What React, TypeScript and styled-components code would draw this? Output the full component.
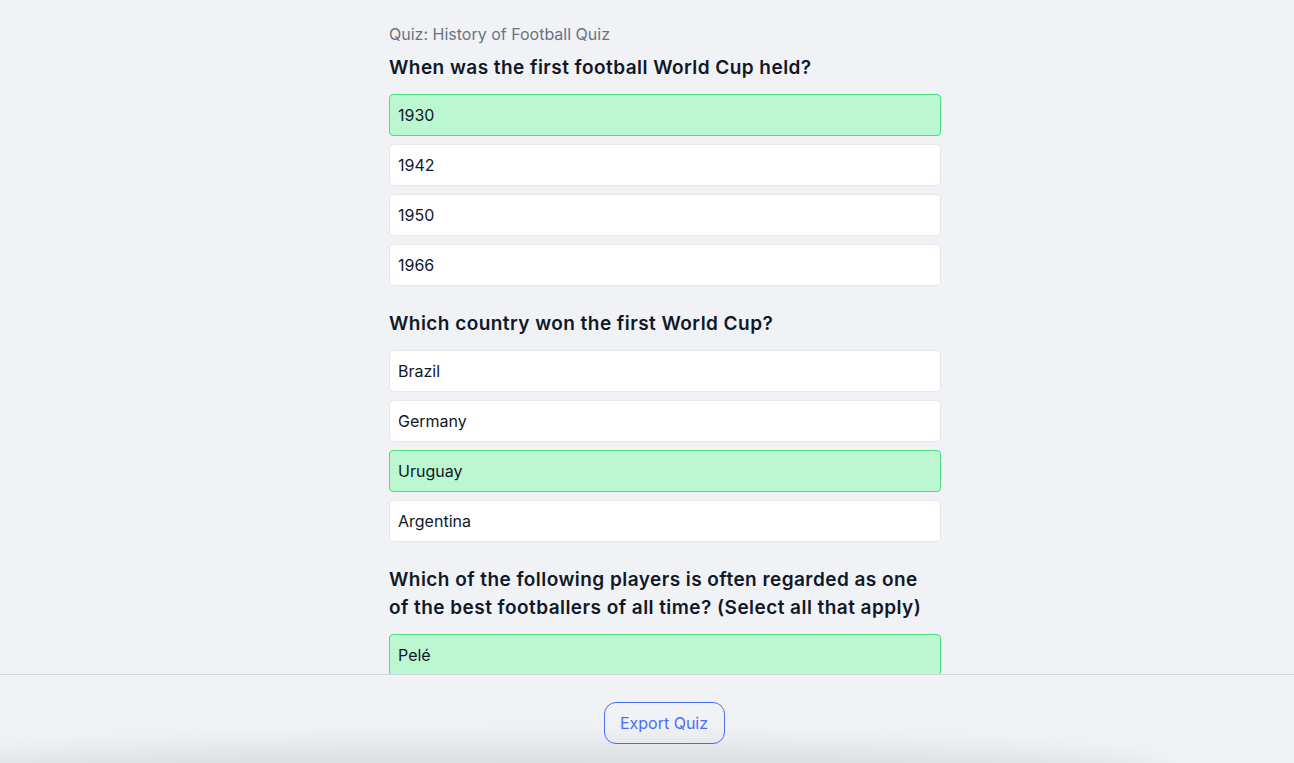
import React from "react";
import styled, { createGlobalStyle } from "styled-components";

const Global = createGlobalStyle`
  html, body { margin: 0; padding: 0; height: 100%; overflow: hidden; }
  body { background: #f0f2f6; font-family: Inter, "Noto Sans", "Liberation Sans", sans-serif; color: #111827; }
  #root { height: 100%; }
`;

const Page = styled.div`
  height: 100vh;
  display: flex;
  flex-direction: column;
  position: relative;
  overflow: hidden;
`;

const Scroll = styled.main`
  flex: 1;
  overflow: hidden;
  padding: 22px 0 0 36px;
  display: flex;
  justify-content: center;
`;

const Column = styled.div`
  width: 552px;
  display: flex;
  flex-direction: column;
`;

const QuizTitle = styled.div`
  font-size: 16px;
  line-height: 24px;
  color: #6b7280;
  margin-bottom: 8px;
`;

const Group = styled.section`
  display: flex;
  flex-direction: column;
  gap: 8px;
  margin-bottom: 24px;
`;

const Question = styled.h2`
  margin: 0 0 4px;
  font-size: 19px;
  line-height: 28px;
  font-weight: 600;
  letter-spacing: 0.45px;
  color: #111827;
`;

const Option = styled.div<{ $correct?: boolean }>`
  box-sizing: border-box;
  height: 42px;
  display: flex;
  align-items: center;
  padding: 0 8px;
  border-radius: 4px;
  font-size: 16px;
  color: #111827;
  background: ${(p) => (p.$correct ? "#bbf7d0" : "#ffffff")};
  border: 1px solid ${(p) => (p.$correct ? "#4ade80" : "#e5e7eb")};
`;

const Footer = styled.footer`
  height: 88px;
  flex: none;
  border-top: 1px solid #d1d5db;
  background: #f0f2f6;
  display: flex;
  align-items: center;
  justify-content: center;
  padding-left: 34px;
  position: relative;
  overflow: hidden;
  &::after {
    content: "";
    position: absolute;
    left: -80px;
    width: 1240px;
    bottom: -40px;
    height: 40px;
    border-radius: 50%;
    box-shadow: 0 -6px 30px 12px rgba(0, 0, 0, 0.09);
    pointer-events: none;
  }
`;

const ExportButton = styled.button`
  box-sizing: border-box;
  width: 121px;
  height: 42px;
  margin-top: 8px;
  border: 1px solid #4a6ff5;
  border-radius: 12px;
  background: transparent;
  color: #4a6ff5;
  font-family: inherit;
  font-size: 16px;
  cursor: pointer;
`;

const questions = [
  {
    q: "When was the first football World Cup held?",
    options: ["1930", "1942", "1950", "1966"],
    correct: [0],
  },
  {
    q: "Which country won the first World Cup?",
    options: ["Brazil", "Germany", "Uruguay", "Argentina"],
    correct: [2],
  },
  {
    q: "Which of the following players is often regarded as one of the best footballers of all time? (Select all that apply)",
    options: ["Pelé", "Diego Maradona", "Lionel Messi", "Cristiano Ronaldo"],
    correct: [0, 1, 2, 3],
  },
];

export default function App() {
  return (
    <Page>
      <Global />
      <Scroll>
        <Column>
          <QuizTitle>Quiz: History of Football Quiz</QuizTitle>
          {questions.map((item) => (
            <Group key={item.q}>
              <Question>{item.q}</Question>
              {item.options.map((o, i) => (
                <Option key={o} $correct={item.correct.includes(i)}>
                  {o}
                </Option>
              ))}
            </Group>
          ))}
        </Column>
      </Scroll>
      <Footer>
        <ExportButton>Export Quiz</ExportButton>
      </Footer>
    </Page>
  );
}
